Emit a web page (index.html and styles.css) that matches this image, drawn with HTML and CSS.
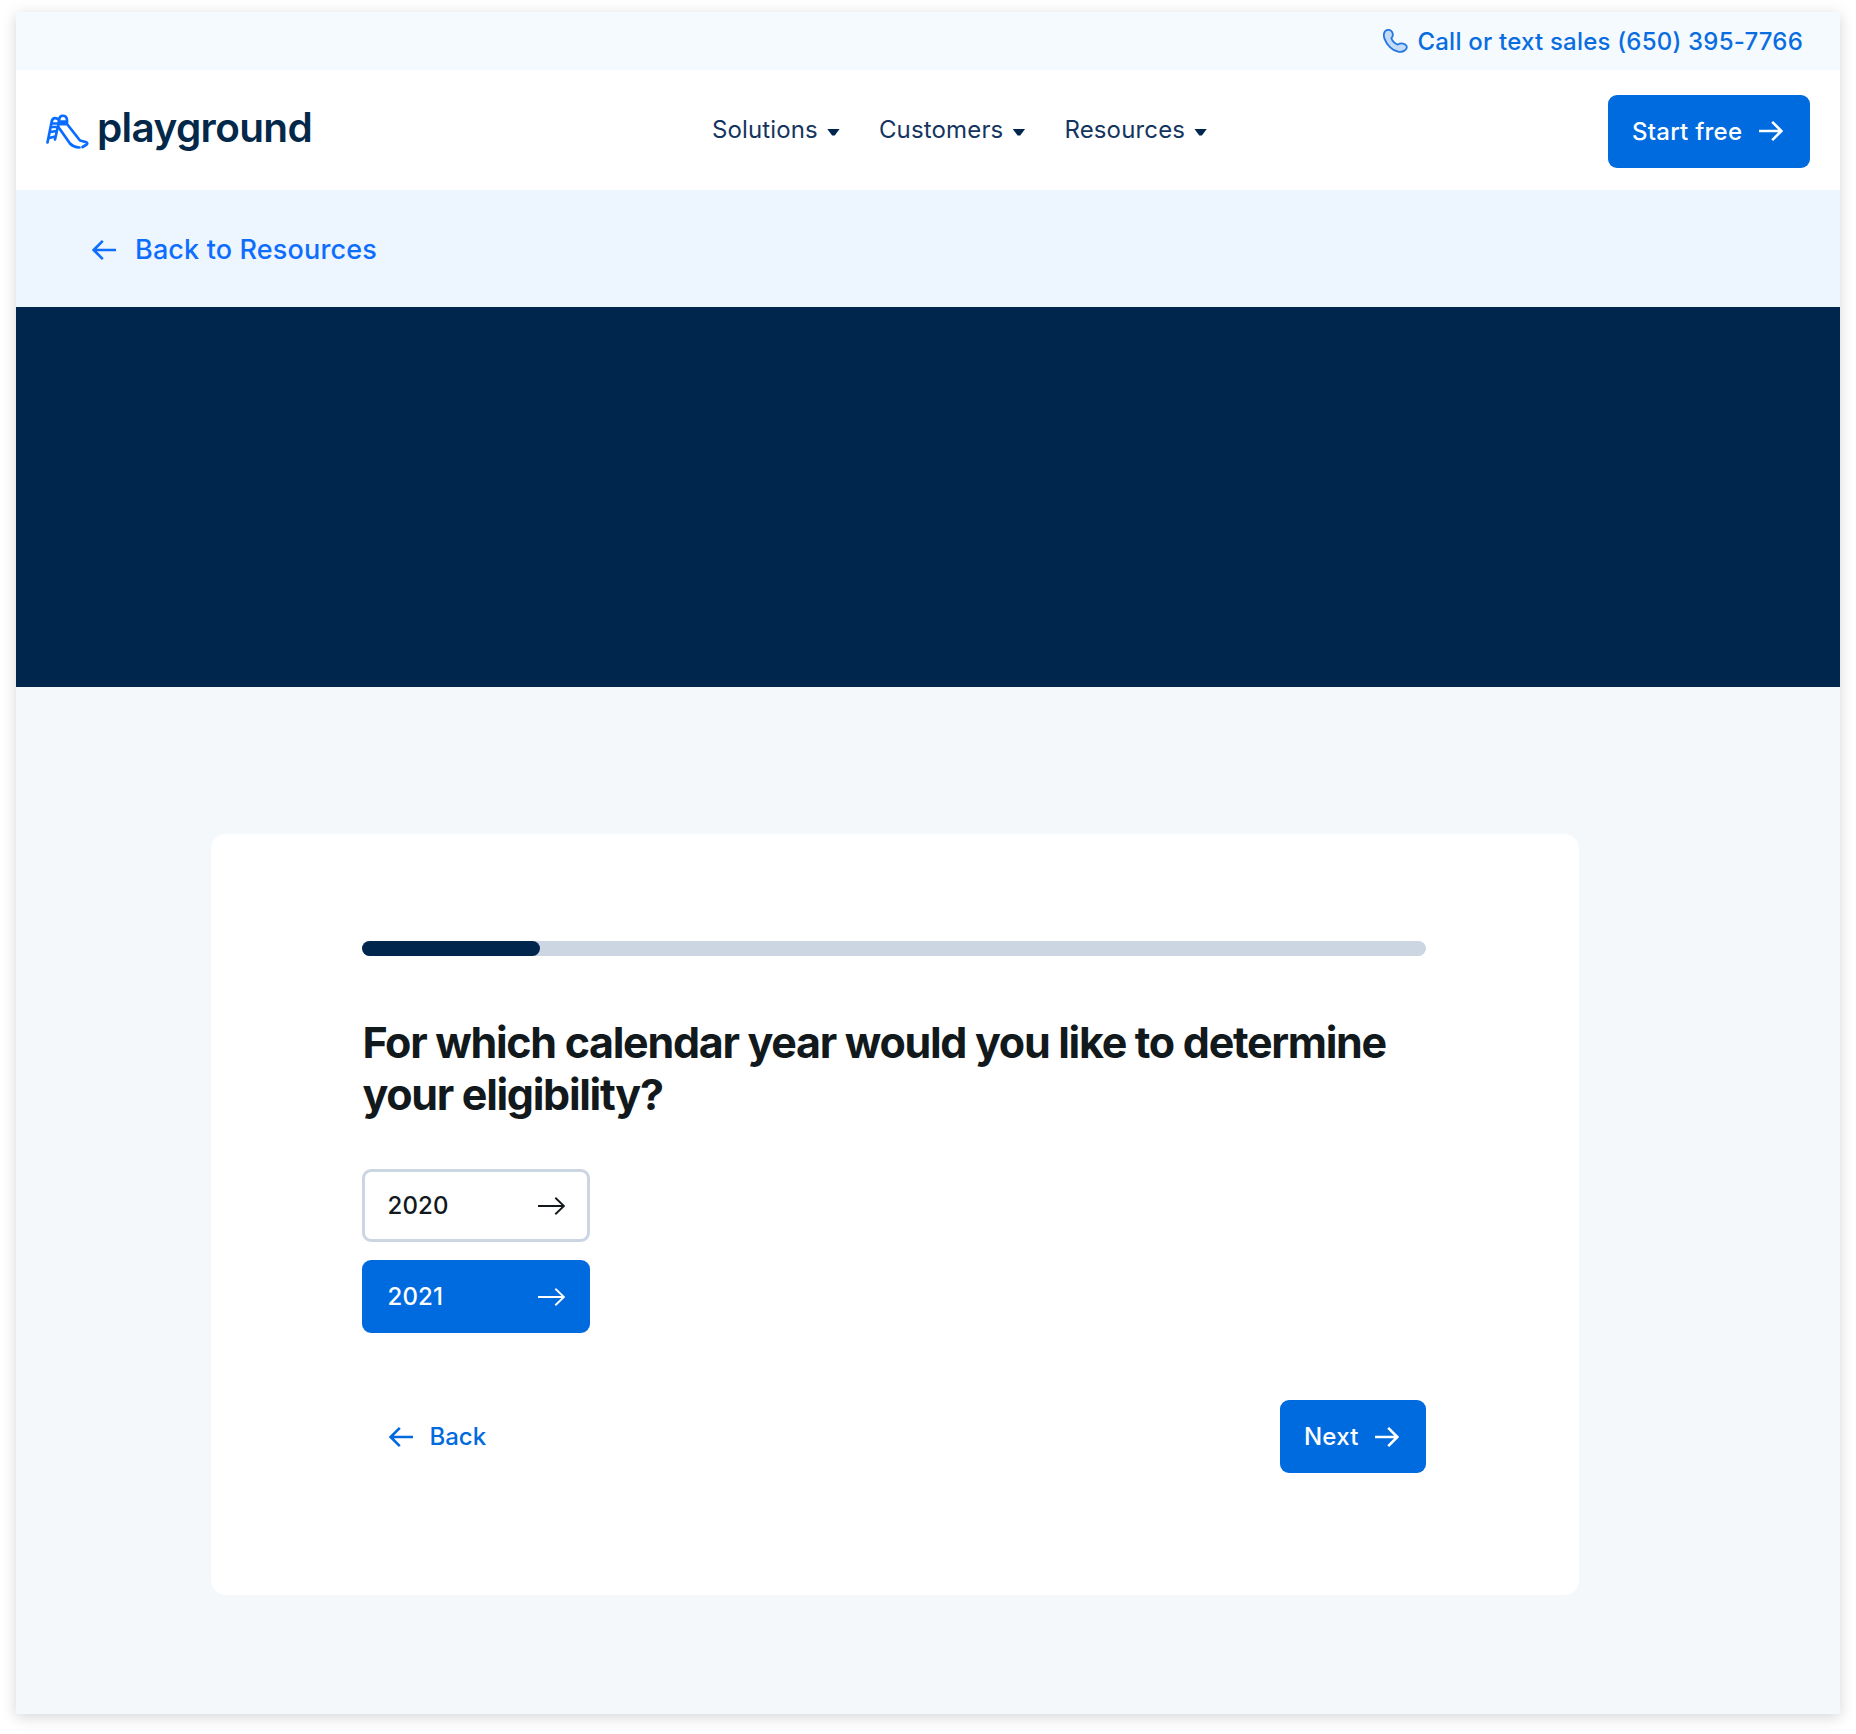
FILE: index.html
```html
<!DOCTYPE html>
<html lang="en">
<head>
<meta charset="utf-8">
<title>Playground</title>
<link rel="stylesheet" href="styles.css">
</head>
<body>
<svg class="sprite" aria-hidden="true">
  <symbol id="arrow" viewBox="0 0 24 20"><path d="M0 10H22.5M13.2 .9L22.3 10L13.2 19.1" fill="none" stroke="currentColor" stroke-width="2.6"/></symbol>
  <symbol id="thin-arrow" viewBox="0 0 27 18"><path d="M0 9H26M17.3 .7L26 9L17.3 17.3" fill="none" stroke="currentColor" stroke-width="1.9"/></symbol>
</svg>
<div class="page">
  <div class="topbar">
    <a class="phone">
      <svg class="phone-icon" viewBox="0 0 25 24"><path d="M2.2 2.1C4.3.2 7.8.3 9.2 3.2C10.6 6 9.9 7.4 8.4 9.2C9.1 11.6 12 14.9 14.9 15.6C17 14 19.2 14 21.8 15.2C24.6 16.7 24.4 19.5 22 21.3C18.2 24.4 12.2 23 7.2 18.3C2.2 13.6-1.2 6 2.2 2.1Z" fill="#c3dbf7" stroke="#2278e0" stroke-width="1.8"/></svg>
      <span>Call or text sales (650) 395-7766</span>
    </a>
  </div>
  <header class="nav">
    <a class="logo">
      <svg class="slide" viewBox="0 0 43 36" fill="none" stroke="#0a6cff" stroke-width="2.7" stroke-linecap="round" stroke-linejoin="round"><path d="M1.5 28.5L5.8 7Q6.8 3.6 10 4.3L13 5.5M9 25.5L12 12M6 9.5H12.5M5 13H12M4.3 18L10.5 17M3 24L9.5 22.5"/><path d="M13 10.5Q12 2.8 16 1.8Q20.6 1.2 21 5.8V10L34 26.5L40.5 28.3Q42.3 29.5 40 31L36.5 33M33.5 33.5Q27 33 24 29.5L12 12.5M13.5 7.5H20.5M14 10.2H20"/></svg>
      <span class="wordmark">playground</span>
    </a>
    <nav class="menu">
      <a class="item">Solutions<i class="caret"></i></a>
      <a class="item">Customers<i class="caret"></i></a>
      <a class="item">Resources<i class="caret"></i></a>
    </nav>
    <a class="button start"><span>Start free</span><svg class="arrow"><use href="#arrow"/></svg></a>
  </header>
  <div class="crumb">
    <a><svg class="arrow flip"><use href="#arrow"/></svg><span>Back to Resources</span></a>
  </div>
  <div class="hero"></div>
  <main class="content">
    <section class="card">
      <div class="progress"><div class="fill" style="width:16.67%"></div></div>
      <h1>For which calendar year would you like to determine<br>your eligibility?</h1>
      <div class="options">
        <button class="option"><span>2020</span><svg class="thin-arrow"><use href="#thin-arrow"/></svg></button>
        <button class="option selected"><span>2021</span><svg class="thin-arrow"><use href="#thin-arrow"/></svg></button>
      </div>
      <div class="actions">
        <a class="back"><svg class="arrow flip"><use href="#arrow"/></svg><span>Back</span></a>
        <a class="button next"><span>Next</span><svg class="arrow"><use href="#arrow"/></svg></a>
      </div>
    </section>
  </main>
</div>
</body>
</html>
```
FILE: styles.css
```css
* { box-sizing: border-box; }
body { margin: 0; background: #fff; font-family: Inter, "Liberation Sans", sans-serif; font-size: 24px; line-height: 30px; }
.sprite { display: none; }
.page { width: 1824px; height: 1702px; margin: 12px 16px 20px; display: flex; flex-direction: column; box-shadow: 0 3px 14px rgba(0,0,0,.17); }
svg { flex: none; display: block; }
a, span { white-space: nowrap; }
.arrow { width: 24px; height: 20px; }
.thin-arrow { width: 27px; height: 18px; }
.flip { transform: scaleX(-1); }
.topbar { height: 58px; background: #f5faff; display: flex; justify-content: flex-end; align-items: center; padding: 2px 37px 0 0; }
.phone { display: flex; align-items: center; gap: 9px; color: #0a6ddf; font-weight: 500; letter-spacing: .21px; }
.phone-icon { width: 25px; height: 24px; margin-top: -2px; }
.nav { height: 120px; background: #fff; display: grid; grid-template-columns: 1fr auto 1fr; align-items: center; padding: 2px 30px 0; }
.logo { display: flex; align-items: center; gap: 8px; }
.slide { width: 43px; height: 36px; margin-top: 1px; }
.wordmark { color: #03284a; font-size: 40.5px; font-weight: 600; letter-spacing: -.65px; line-height: 50px; margin-top: -7px; }
.menu { display: flex; gap: 38px; color: #14355f; letter-spacing: .15px; margin: -2px -32px 0 32px; }
.item { display: flex; align-items: center; gap: 8px; }
.caret { width: 13px; height: 7px; background: #00264d; clip-path: polygon(0 0, 100% 0, 60% 100%, 40% 100%); margin: 4px 1px 0; }
.button { display: flex; align-items: center; justify-content: space-between; height: 73px; padding: 0 27px 0 24px; background: #006adf; color: #fff; border-radius: 9px; font-weight: 500; }
.start { width: 202px; justify-self: end; letter-spacing: .25px; }
.start span { margin-top: 2px; }
.crumb { height: 117px; background: #edf5ff; padding: 2px 0 0 76px; display: flex; align-items: center; font-size: 27px; font-weight: 500; letter-spacing: .15px; color: #0d6efd; }
.crumb a { display: flex; align-items: center; gap: 19px; }
.hero { height: 380px; background: #00264d; }
.content { flex: 1; background: #f4f8fb; padding: 147px 0 0 195px; }
.card { width: 1368px; height: 761px; background: #fff; border-radius: 15px; padding: 107px 153px 0 151.4px; }
.progress { height: 15px; border-radius: 8px; background: #ccd6e3; }
.fill { height: 100%; border-radius: 8px; background: #00264d; }
h1 { margin: 60px 0 0; color: #12191d; font-size: 43px; font-weight: 700; line-height: 52px; letter-spacing: -1.3px; white-space: nowrap; }
.options { margin-top: 49px; display: flex; flex-direction: column; gap: 18px; }
.option { width: 228px; height: 73px; border: 3px solid #ccd6e3; border-radius: 9px; background: #fff; color: #12191d; padding: 0 22px; display: flex; align-items: center; justify-content: space-between; font: 500 24px/30px Inter, "Liberation Sans", sans-serif; letter-spacing: .2px; }
.option span { margin-top: 1px; }
.selected { background: #006adf; border-color: #006adf; color: #fff; }
.actions { margin-top: 67px; display: flex; justify-content: space-between; align-items: center; }
.back { display: flex; align-items: center; gap: 16px; padding-left: 27px; color: #006adf; font-weight: 500; }
.next { width: 146px; letter-spacing: .2px; }
```
